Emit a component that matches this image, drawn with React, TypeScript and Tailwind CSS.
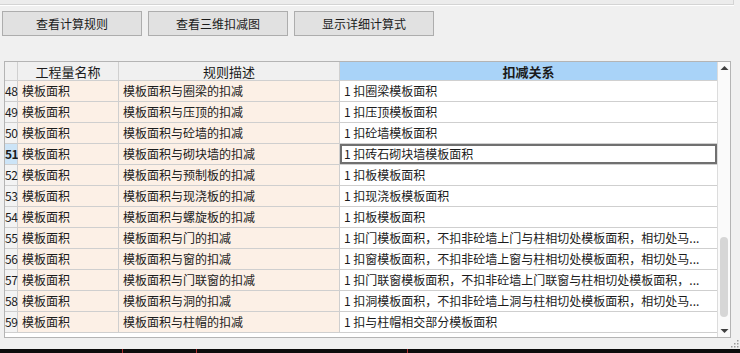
const rows = [
  { n: 48, desc: '模板面积与圈梁的扣减', rel: '1 扣圈梁模板面积' },
  { n: 49, desc: '模板面积与压顶的扣减', rel: '1 扣压顶模板面积' },
  { n: 50, desc: '模板面积与砼墙的扣减', rel: '1 扣砼墙模板面积' },
  { n: 51, desc: '模板面积与砌块墙的扣减', rel: '1 扣砖石砌块墙模板面积' },
  { n: 52, desc: '模板面积与预制板的扣减', rel: '1 扣板模板面积' },
  { n: 53, desc: '模板面积与现浇板的扣减', rel: '1 扣现浇板模板面积' },
  { n: 54, desc: '模板面积与螺旋板的扣减', rel: '1 扣板模板面积' },
  { n: 55, desc: '模板面积与门的扣减', rel: '1 扣门模板面积，不扣非砼墙上门与柱相切处模板面积，相切处马...' },
  { n: 56, desc: '模板面积与窗的扣减', rel: '1 扣窗模板面积，不扣非砼墙上窗与柱相切处模板面积，相切处马...' },
  { n: 57, desc: '模板面积与门联窗的扣减', rel: '1 扣门联窗模板面积，不扣非砼墙上门联窗与柱相切处模板面积，...' },
  { n: 58, desc: '模板面积与洞的扣减', rel: '1 扣洞模板面积，不扣非砼墙上洞与柱相切处模板面积，相切处马...' },
  { n: 59, desc: '模板面积与柱帽的扣减', rel: '1 扣与柱帽相交部分模板面积' },
];

const buttons = ['查看计算规则', '查看三维扣减图', '显示详细计算式'];

export default function App() {
  return (
    <div
      className="w-[740px] h-[353px] bg-[#f0f0f0] flex flex-col text-[#1b1b1b] overflow-hidden"
      style={{ fontFamily: '"Noto Sans CJK SC", "Noto Sans", sans-serif' }}
    >
      {/* top panel edge */}
      <div className="w-[734px] h-[5px] bg-[#ececec] border-b border-r border-[#d4d4d4] shadow-[0_1px_0_#ffffff]" />

      {/* toolbar buttons */}
      <div className="flex gap-[6px] ml-[2px] mt-[6px]">
        {buttons.map((b) => (
          <button
            key={b}
            className="w-[140px] h-[25px] bg-[#e1e1e1] border border-[#adadad] text-[12px] leading-none"
          >
            {b}
          </button>
        ))}
      </div>

      {/* grid */}
      <div className="ml-[4px] mt-[25px] w-[727px] h-[277px] border border-[#b4b4b4] bg-white flex">
        <div className="w-[712px] flex flex-col">
          {/* header */}
          <div className="flex h-[19px] text-[13px] leading-[19px] border-b border-[#d0d0d0]">
            <div className="w-[13px] bg-[#f0f0f0] border-r border-[#d0d0d0]" />
            <div className="w-[101px] bg-[#f0f0f0] border-r border-[#d0d0d0] text-center">工程量名称</div>
            <div className="w-[221px] bg-[#f0f0f0] border-r border-[#d0d0d0] text-center">规则描述</div>
            <div className="flex-1 bg-[#a9d3f8] text-center font-bold">扣减关系</div>
          </div>
          {rows.map((r) => {
            const sel = r.n === 51;
            return (
              <div key={r.n} className="flex h-[21px] text-[12px] leading-[20px] border-b border-[#cfcfcf]">
                <div
                  className={
                    sel
                      ? 'w-[13px] bg-[#cce4f7] border-r border-[#cfcfcf] font-bold text-[12px] tracking-[-0.5px]'
                      : 'w-[13px] bg-[#f3f3f3] border-r border-[#cfcfcf] text-[12px] tracking-[-0.5px]'
                  }
                >
                  {r.n}
                </div>
                <div className="w-[101px] bg-[#fcf0e6] border-r border-[#cfcfcf] pl-[4px] whitespace-nowrap">
                  模板面积
                </div>
                <div className="w-[221px] bg-[#fcf0e6] border-r border-[#cfcfcf] pl-[4px] whitespace-nowrap overflow-hidden">
                  {r.desc}
                </div>
                <div
                  className={
                    sel
                      ? 'flex-1 bg-white border-2 border-[#707070] pl-[2px] leading-[16px] whitespace-nowrap overflow-hidden'
                      : 'flex-1 bg-white pl-[4px] whitespace-nowrap overflow-hidden'
                  }
                >
                  {r.rel}
                </div>
              </div>
            );
          })}
          <div className="flex-1 bg-white" />
        </div>

        {/* vertical scrollbar */}
        <div className="flex-1 border-l border-[#dcdcdc] bg-[#fafafa] flex flex-col items-center">
          <svg width="9" height="12" viewBox="0 0 9 12" className="mt-[1px]">
            <polygon points="0.5,7 4.5,3 8.5,7" fill="#404040" />
          </svg>
          <div className="mt-[162px] w-[8px] h-[80px] rounded-full bg-[#d6d6d6]" />
          <div className="flex-1" />
          <svg width="9" height="12" viewBox="0 0 9 12" className="mb-[1px]">
            <polygon points="0.5,5 8.5,5 4.5,9" fill="#404040" />
          </svg>
        </div>
      </div>

      {/* resize grip */}
      <div className="flex justify-end h-[11px] pr-[1px]">
        <svg width="8" height="10" viewBox="0 0 8 10">
          <rect x="6" y="2" width="1.5" height="1.5" fill="#9a9a9a" />
          <rect x="3" y="5" width="1.5" height="1.5" fill="#9a9a9a" />
          <rect x="6" y="5" width="1.5" height="1.5" fill="#9a9a9a" />
          <rect x="0" y="8" width="1.5" height="1.5" fill="#9a9a9a" />
          <rect x="3" y="8" width="1.5" height="1.5" fill="#9a9a9a" />
          <rect x="6" y="8" width="1.5" height="1.5" fill="#9a9a9a" />
        </svg>
      </div>

      {/* bottom dark strip */}
      <div className="flex-1 bg-[#0c0c0c] flex">
        <div className="ml-[122px] w-px bg-[#b03030]" />
        <div className="ml-[73px] w-px bg-[#b03030]" />
        <div className="ml-[210px] w-px bg-[#b03030]" />
      </div>
    </div>
  );
}
